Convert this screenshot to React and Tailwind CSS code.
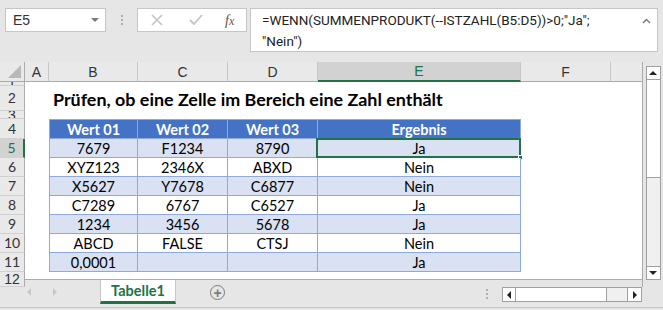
import React from 'react'

const rows = [
  { n: 5, band: true, v: ['7679', 'F1234', '8790', 'Ja'] },
  { n: 6, band: false, v: ['XYZ123', '2346X', 'ABXD', 'Nein'] },
  { n: 7, band: true, v: ['X5627', 'Y7678', 'C6877', 'Nein'] },
  { n: 8, band: false, v: ['C7289', '6767', 'C6527', 'Ja'] },
  { n: 9, band: true, v: ['1234', '3456', '5678', 'Ja'] },
  { n: 10, band: false, v: ['ABCD', 'FALSE', 'CTSJ', 'Nein'] },
  { n: 11, band: true, v: ['0,0001', '', '', 'Ja'] },
]

const cellFont = { fontFamily: 'Lato, "Liberation Sans", sans-serif' }

// row number on the left edge
const RowHead = ({ n, selected }) => (
  <div
    className={`w-[25px] shrink-0 flex items-center justify-center overflow-hidden border-b border-[#d0d0d0] text-[14px] leading-none ${
      selected
        ? 'bg-[#d2d2d2] text-[#217346] border-r-2 border-r-[#217346]'
        : 'bg-[#e9e9e9] text-[#333] border-r border-r-[#ababab]'
    }`}
  >
    {n}
  </div>
)

const Filler = () => <div className="w-[24px] shrink-0" />

const Tail = () => (
  <>
    <div className="w-[90px] shrink-0" />
    <div className="w-[32px] shrink-0 border-r border-[#ababab]" />
  </>
)

const ColHead = ({ label, w, selected }) => (
  <div
    className={`${w} shrink-0 flex items-center justify-center pt-[1px] text-[14px] ${
      selected
        ? 'bg-[#d2d2d2] text-[#217346] border-b-2 border-b-[#217346] border-r border-r-[#c6c6c6]'
        : 'bg-[#e9e9e9] text-[#333] border-b border-b-[#ababab] border-r border-r-[#c6c6c6]'
    }`}
  >
    {label}
  </div>
)

const App = () => {
  return (
    <div
      className="w-[663px] h-[310px] bg-[#e6e6e6] overflow-hidden flex flex-col"
      style={{ fontFamily: '"Liberation Sans", Arial, sans-serif' }}
    >
      {/* Formula bar area */}
      <div className="h-[62px] shrink-0 flex items-start pt-[8px] pl-[5px]">
        <div className="w-[101px] h-[24px] bg-white border border-[#c6c6c6] flex items-center justify-between pl-[7px] pr-[6px] text-[14px] text-[#333]">
          <span>E5</span>
          <span className="w-0 h-0 border-l-[4px] border-r-[4px] border-t-[4px] border-l-transparent border-r-transparent border-t-[#7a7a7a]" />
        </div>
        <div className="w-[31px] h-[24px] flex flex-col items-center justify-center gap-[2px]">
          <span className="w-[2px] h-[2px] bg-[#b0b0b0]" />
          <span className="w-[2px] h-[2px] bg-[#b0b0b0]" />
          <span className="w-[2px] h-[2px] bg-[#b0b0b0]" />
        </div>
        <div className="w-[110px] h-[24px] bg-white border border-[#c6c6c6] flex items-center">
          <svg className="ml-[13px]" width="12" height="12" viewBox="0 0 12 12">
            <path d="M1 1 L11 11 M11 1 L1 11" stroke="#c4c4c4" strokeWidth="1.6" />
          </svg>
          <svg className="ml-[26px]" width="14" height="12" viewBox="0 0 14 12">
            <path d="M1 6 L5 10 L13 1" stroke="#c4c4c4" strokeWidth="1.8" fill="none" />
          </svg>
          <span
            className="ml-[22px] text-[14px] italic text-[#555]"
            style={{ fontFamily: '"Liberation Serif", serif' }}
          >
            f<span className="text-[12px]">x</span>
          </span>
        </div>
        <div
          className="ml-[3px] w-[408px] h-[44px] bg-white border border-[#c6c6c6] flex justify-between pl-[11px] pr-[6px] pt-[1px] text-[13.5px] leading-[21px] text-[#222]"
          style={{ fontFamily: 'Roboto, "Liberation Sans", sans-serif' }}
        >
          <div className="whitespace-nowrap">
            <div>=WENN(SUMMENPRODUKT(--ISTZAHL(B5:D5))&gt;0;"Ja";</div>
            <div>"Nein")</div>
          </div>
          <svg className="mt-[8px]" width="9" height="6" viewBox="0 0 9 6">
            <path d="M1 5 L4.5 1.5 L8 5" stroke="#777" strokeWidth="1.4" fill="none" />
          </svg>
        </div>
      </div>

      {/* Sheet + vertical scrollbar */}
      <div className="h-[218px] shrink-0 flex">
        <div className="w-[643px] shrink-0 flex flex-col bg-white border-b border-[#ababab]">
          {/* column headers */}
          <div className="h-[20px] shrink-0 flex">
            <div className="w-[25px] shrink-0 bg-[#e9e9e9] border-r border-b border-[#ababab] flex items-end justify-end pr-[3px] pb-[3px]">
              <svg width="13" height="13" viewBox="0 0 13 13">
                <path d="M13 0 L13 13 L0 13 Z" fill="#b8b8b8" />
              </svg>
            </div>
            <ColHead label="A" w="w-[24px]" />
            <ColHead label="B" w="w-[89px]" />
            <ColHead label="C" w="w-[90px]" />
            <ColHead label="D" w="w-[90px]" />
            <ColHead label="E" w="w-[203px]" selected />
            <ColHead label="F" w="w-[90px]" />
            <div className="w-[32px] shrink-0 bg-[#e9e9e9] border-b border-[#ababab] border-r border-r-[#ababab]" />
          </div>

          {/* row 1 */}
          <div className="h-[4px] shrink-0 flex">
            <RowHead n={1} />
            <div className="flex-1 border-r border-[#ababab]" />
          </div>

          {/* row 2: title */}
          <div className="h-[25px] shrink-0 flex">
            <RowHead n={2} />
            <Filler />
            <div
              className="w-[89px] shrink-0 flex items-end pl-[4px] pb-[2px] whitespace-nowrap overflow-visible text-[17.9px] font-bold text-black leading-none"
              style={cellFont}
            >
              Prüfen, ob eine Zelle im Bereich eine Zahl enthält
            </div>
            <div className="flex-1 border-r border-[#ababab]" />
          </div>

          {/* row 3 */}
          <div className="h-[8px] shrink-0 flex">
            <RowHead n={3} />
            <div className="flex-1 border-r border-[#ababab]" />
          </div>

          {/* row 4: table head */}
          <div className="h-[20px] shrink-0 flex" style={cellFont}>
            <RowHead n={4} />
            <Filler />
            {['Wert 01', 'Wert 02', 'Wert 03', 'Ergebnis'].map((h, i) => (
              <div
                key={h}
                className={`${
                  i === 3 ? 'w-[203px]' : i === 0 ? 'w-[89px] border-l' : 'w-[90px]'
                } shrink-0 bg-[#4472c4] border-r border-t border-b border-[#8ea9db] flex items-center justify-center pt-[2px] text-white font-bold text-[14.5px]`}
              >
                {h}
              </div>
            ))}
            <Tail />
          </div>

          {/* data rows */}
          {rows.map((r) => (
            <div key={r.n} className="h-[19px] shrink-0 flex" style={cellFont}>
              <RowHead n={r.n} selected={r.n === 5} />
              <Filler />
              {r.v.map((val, i) => (
                <div
                  key={i}
                  className={`${
                    i === 3 ? 'w-[203px] relative' : i === 0 ? 'w-[89px] border-l' : 'w-[90px]'
                  } shrink-0 border-r border-b border-[#8ea9db] flex items-center justify-center pt-[2px] text-[14.5px] text-black ${
                    r.band ? 'bg-[#d9e1f2]' : 'bg-white'
                  }`}
                >
                  {val}
                  {r.n === 5 && i === 3 && (
                    <>
                      <div className="absolute -left-[2px] -top-[1px] -right-[1px] -bottom-[1px] border-2 border-[#217346]" />
                      <div className="absolute -right-[3px] -bottom-[3px] w-[5px] h-[5px] bg-[#217346] border border-white" />
                    </>
                  )}
                </div>
              ))}
              <Tail />
            </div>
          ))}

          {/* row 12 partial */}
          <div className="flex-1 flex">
            <RowHead n={12} />
            <div className="flex-1 border-r border-[#ababab]" />
          </div>
        </div>

        {/* vertical scrollbar */}
        <div className="flex-1 flex flex-col items-center pt-[4px]">
          <div className="w-[15px] h-[14px] bg-white border border-[#a0a0a0] flex items-center justify-center">
            <span className="w-0 h-0 border-l-[4px] border-r-[4px] border-b-[4px] border-l-transparent border-r-transparent border-b-[#222]" />
          </div>
          <div className="w-[15px] h-[98px] bg-white border border-t-0 border-[#a0a0a0]" />
          <div className="w-[15px] flex-1 bg-[#f0f0f0] border-x border-[#a0a0a0]" />
          <div className="w-[15px] h-[14px] bg-white border border-[#a0a0a0] flex items-center justify-center">
            <span className="w-0 h-0 border-l-[4px] border-r-[4px] border-t-[4px] border-l-transparent border-r-transparent border-t-[#222]" />
          </div>
        </div>
      </div>

      {/* sheet tabs + horizontal scrollbar */}
      <div className="h-[28px] shrink-0 flex items-start border-b border-[#c6c6c6]">
        <div className="w-[100px] h-[24px] shrink-0 flex items-center pl-[27px] gap-[22px]">
          <span className="w-0 h-0 border-t-[4px] border-b-[4px] border-r-[4px] border-t-transparent border-b-transparent border-r-[#c8c8c8]" />
          <span className="w-0 h-0 border-t-[4px] border-b-[4px] border-l-[4px] border-t-transparent border-b-transparent border-l-[#c8c8c8]" />
        </div>
        <div
          className="w-[76px] h-[24px] shrink-0 bg-white border-x border-[#c6c6c6] border-b-[3px] border-b-[#217346] flex items-center justify-center pt-[1px] text-[14.5px] font-bold text-[#217346]"
          style={cellFont}
        >
          Tabelle1
        </div>
        <div className="ml-[34px] mt-[5px] w-[15px] h-[15px] rounded-full border-[1.5px] border-[#7a7a7a] flex items-center justify-center text-[#7a7a7a] text-[14px] leading-none font-bold">
          +
        </div>
        <div className="ml-[261px] mt-[9px] flex flex-col gap-[2px]">
          <span className="w-[2px] h-[2px] bg-[#b0b0b0]" />
          <span className="w-[2px] h-[2px] bg-[#b0b0b0]" />
          <span className="w-[2px] h-[2px] bg-[#b0b0b0]" />
        </div>
        <div className="ml-[14px] mt-[7px] flex h-[15px]">
          <div className="w-[14px] h-[15px] bg-white border border-[#a0a0a0] flex items-center justify-center">
            <span className="w-0 h-0 border-t-[4px] border-b-[4px] border-r-[4px] border-t-transparent border-b-transparent border-r-[#222]" />
          </div>
          <div className="w-[91px] h-[15px] bg-white border-y border-r border-[#a0a0a0]" />
          <div className="w-[20px] h-[15px] bg-[#f0f0f0] border-y border-[#a0a0a0]" />
          <div className="w-[15px] h-[15px] bg-white border border-[#a0a0a0] flex items-center justify-center">
            <span className="w-0 h-0 border-t-[4px] border-b-[4px] border-l-[4px] border-t-transparent border-b-transparent border-l-[#222]" />
          </div>
        </div>
      </div>
    </div>
  )
}

export default App
